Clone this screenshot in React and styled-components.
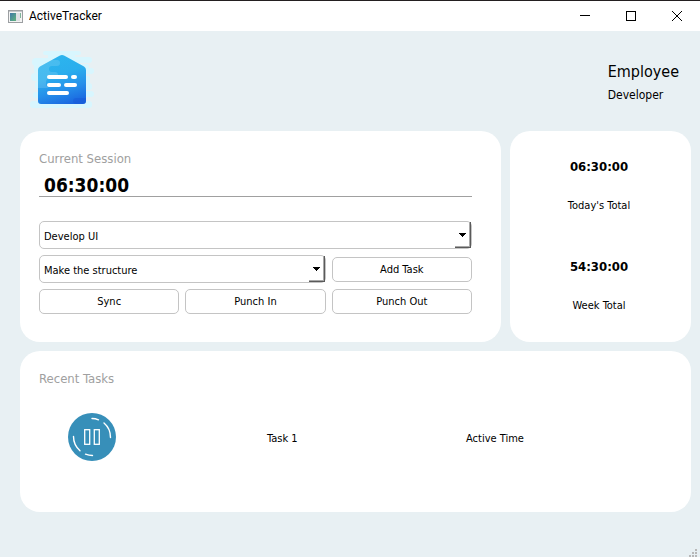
import React from "react";
import styled, { createGlobalStyle } from "styled-components";

const GlobalStyle = createGlobalStyle`
  *, *::before, *::after { box-sizing: border-box; }
  body {
    margin: 0;
    background: #e8f0f3;
    color: #000;
    font: 11px/16px "DejaVu Sans Condensed", "DejaVu Sans", sans-serif;
  }
  button, input, select { font: inherit; color: inherit; }
`;

const Window = styled.div`
  display: flex;
  flex-direction: column;
  min-height: 100vh;
  border-top: 1px solid #231f20;
`;

const TitleBar = styled.header`
  display: flex;
  align-items: center;
  height: 30px;
  padding-left: 8px;
  background: #fff;
`;

const AppTitle = styled.h1`
  flex: 1;
  margin: 0 0 0 6px;
  font: 400 12px/16px Roboto, "Open Sans", sans-serif;
`;

const WindowButton = styled.button`
  display: grid;
  place-items: center;
  width: 46px;
  height: 30px;
  padding: 0;
  border: 0;
  background: transparent;
`;

const Main = styled.main`
  display: flex;
  flex: 1;
  flex-direction: column;
  padding: 0 9px 0 20px;
`;

const Header = styled.div`
  display: flex;
  justify-content: space-between;
  height: 100px;
  padding: 17px 12px 0 10px;
`;

const Person = styled.div`
  padding-top: 12px;
`;

const PersonName = styled.div`
  font-size: 16px;
  line-height: 24px;
`;

const PersonRole = styled.div`
  font-size: 12px;
  line-height: 22px;
`;

const Panels = styled.div`
  display: grid;
  grid-template-columns: 481fr 181fr;
  gap: 9px;
`;

const Card = styled.section`
  border-radius: 20px;
  background: #fff;
`;

const SessionCard = styled(Card)`
  padding: 19px 29px 28px 19px;
`;

const TotalsCard = styled(Card)`
  display: flex;
  flex-direction: column;
  gap: 41px;
  padding: 26px 3px 0 0;
  text-align: center;
`;

const TasksCard = styled(Card)`
  grid-column: 1 / -1;
  padding: 19px 26px 51px 19px;
`;

const SessionLabel = styled.label`
  display: block;
  color: #a0a0a0;
  font-size: 13px;
  line-height: 18px;
`;

const TasksHeading = styled.h2`
  margin: 0;
  color: #a0a0a0;
  font-size: 13px;
  font-weight: 400;
  line-height: 18px;
`;

const SessionTime = styled.input`
  display: block;
  width: 100%;
  height: 29px;
  margin-bottom: 24px;
  padding: 5px 5px 0;
  border: 0;
  border-bottom: 1px solid #a0a0a0;
  background: transparent;
  font-size: 19px;
  font-weight: 700;
`;

const Controls = styled.div`
  display: grid;
  grid-template-columns: repeat(3, 1fr);
  align-items: center;
  gap: 6px;
`;

const ComboFrame = styled.div`
  position: relative;
  grid-column: span ${(p) => p.$span};
  height: 28px;
`;

const ComboSelect = styled.select`
  appearance: none;
  width: 100%;
  height: 100%;
  padding: 4px 20px 0 4px;
  border: 1px solid #c4c4c4;
  border-radius: 5px;
  background: #fff;
`;

const ComboArrow = styled.span`
  position: absolute;
  top: 1px;
  right: 1px;
  bottom: 1px;
  display: grid;
  place-items: center;
  width: 16px;
  border-right: 1px solid #5a5a5a;
  border-bottom: 1px solid #5a5a5a;
  box-shadow: inset -1px -1px #a8a8a8;
  pointer-events: none;
`;

const PushButton = styled.button`
  height: 25px;
  padding: 1px 8px 0;
  border: 1px solid #c4c4c4;
  border-radius: 5px;
  background: #fff;
`;

const TotalValue = styled.div`
  font-size: 13px;
  font-weight: 700;
  line-height: 20px;
`;

const TotalLabel = styled.div`
  margin-top: 19px;
  line-height: 20px;
`;

const TaskRow = styled.div`
  display: grid;
  grid-template-columns: repeat(3, 1fr);
  align-items: center;
  padding: 25px 0 0 29px;
`;

const TaskText = styled.span`
  padding-top: 4px;
`;

const PauseButton = styled.button`
  display: block;
  width: 48px;
  height: 48px;
  padding: 0;
  border: 0;
  border-radius: 50%;
  background: transparent;
`;

const ResizeGrip = styled.svg`
  align-self: flex-end;
  margin-top: auto;
  margin-right: -6px;
`;

function WindowIcon() {
  return (
    <svg width="15" height="13" viewBox="0 0 15 13" aria-hidden="true">
      <defs>
        <linearGradient id="screen" x1="0" y1="0" x2="1" y2="1">
          <stop offset="0" stopColor="#3f78a8" />
          <stop offset="1" stopColor="#5fb37c" />
        </linearGradient>
      </defs>
      <rect x="0.5" y="0.5" width="14" height="12" fill="#f4f4f4" stroke="#9c9fa2" />
      <path d="M1 1.5h13" stroke="#c2c6ca" />
      <rect x="2" y="3" width="6" height="8" fill="url(#screen)" />
      <rect x="8" y="3" width="4" height="8" fill="#dcdfe3" />
      <rect x="12" y="3" width="1" height="5" fill="#7fb59a" />
    </svg>
  );
}

function Logo() {
  return (
    <svg width="66" height="62" viewBox="0 0 66 62" role="img" aria-label="ActiveTracker logo">
      <defs>
        <linearGradient id="house" x1="0.35" y1="0" x2="0.65" y2="1">
          <stop offset="0" stopColor="#2cb5ee" />
          <stop offset="0.4" stopColor="#2baeed" />
          <stop offset="0.7" stopColor="#2590ea" />
          <stop offset="1" stopColor="#1a67e0" />
        </linearGradient>
        <clipPath id="houseClip">
          <path d="M29.500 7.700Q32 6.300 34.500 7.700L54 18.500Q56 19.700 56 22V53Q56 56 53 56H11Q8 56 8 53V22Q8 19.700 10 18.500Z" />
        </clipPath>
      </defs>
      <g fill="#d8f6fe">
        <rect x="13" y="3" width="38" height="4" rx="2" />
        <rect x="18" y="5" width="27" height="7" rx="3" />
        <rect x="2" y="10" width="24" height="8" rx="4" />
        <rect x="40" y="9" width="22" height="6" rx="3" />
        <rect x="4" y="16" width="55" height="9" rx="2" />
        <rect x="46" y="20" width="18" height="6" rx="3" />
        <rect x="1" y="25" width="20" height="8" rx="4" />
        <rect x="48" y="28" width="12" height="9" rx="3" />
        <rect x="5" y="33" width="16" height="8" rx="3" />
        <rect x="48" y="35" width="14" height="7" rx="3" />
        <rect x="3" y="44" width="18" height="6" rx="3" />
        <rect x="45" y="43" width="19" height="6" rx="3" />
        <rect x="0" y="53" width="62" height="7" rx="3" />
      </g>
      <g clipPath="url(#houseClip)">
        <rect x="8" y="6" width="48" height="50" fill="url(#house)" />
        <path
          d="M8 12H27Q30 12 30 15T27 18H22Q19 18 19 21T22 24H25Q28 24 28 27T25 30H20Q16 30 16 35T20 40H8Z"
          fill="#fff"
          opacity="0.14"
        />
        <path d="M56 50H46Q43 50 43 53T46 56H56Z" fill="#1756d5" opacity="0.4" />
      </g>
      <g fill="#fff">
        <rect x="17" y="27" width="21" height="4" rx="2" />
        <rect x="41" y="27" width="6" height="4" rx="2" />
        <rect x="17" y="35" width="14" height="4" rx="2" />
        <rect x="34" y="35" width="13" height="4" rx="2" />
        <rect x="17" y="43" width="22" height="4" rx="2" />
      </g>
    </svg>
  );
}

function PauseIcon() {
  return (
    <svg width="48" height="48" viewBox="0 0 48 48" aria-hidden="true">
      <circle cx="24" cy="24" r="24" fill="#378fb9" />
      <g fill="none" stroke="#fff" strokeWidth="1.3">
        <rect x="16.700" y="16.700" width="5" height="14.600" />
        <rect x="26.300" y="16.700" width="5" height="14.600" />
      </g>
      <g fill="none" stroke="#fff" strokeWidth="1.400" strokeLinecap="round">
        <path d="M24 5.500Q27.500 5.500 30.500 6.800" />
        <path d="M36 10Q42.500 15.500 42.500 24.500" />
        <path d="M5.500 23.500Q5.500 32 12 37.700" />
        <path d="M17.500 41.200Q21 42.500 24.500 42.500" />
      </g>
    </svg>
  );
}

function Combo({ span, label, options }) {
  return (
    <ComboFrame $span={span}>
      <ComboSelect aria-label={label}>
        {options.map((option) => (
          <option key={option}>{option}</option>
        ))}
      </ComboSelect>
      <ComboArrow>
        <svg width="7" height="4" viewBox="0 0 7 4" shapeRendering="crispEdges" aria-hidden="true">
          <path d="M0 0H7V1H6V2H5V3H4V4H3V3H2V2H1V1H0Z" />
        </svg>
      </ComboArrow>
    </ComboFrame>
  );
}

function Total({ value, label }) {
  return (
    <div>
      <TotalValue>{value}</TotalValue>
      <TotalLabel>{label}</TotalLabel>
    </div>
  );
}

export default function App() {
  return (
    <Window>
      <GlobalStyle />
      <TitleBar>
        <WindowIcon />
        <AppTitle>ActiveTracker</AppTitle>
        <WindowButton aria-label="Minimize">
          <svg width="10" height="10" viewBox="0 0 10 10" stroke="#000">
            <path d="M0 4.500H10" />
          </svg>
        </WindowButton>
        <WindowButton aria-label="Maximize">
          <svg width="10" height="10" viewBox="0 0 10 10" fill="none" stroke="#000">
            <rect x="0.5" y="0.5" width="9" height="9" />
          </svg>
        </WindowButton>
        <WindowButton aria-label="Close">
          <svg width="10" height="10" viewBox="0 0 10 10" stroke="#000">
            <path d="M0 0L10 10M10 0L0 10" />
          </svg>
        </WindowButton>
      </TitleBar>
      <Main>
        <Header>
          <Logo />
          <Person>
            <PersonName>Employee</PersonName>
            <PersonRole>Developer</PersonRole>
          </Person>
        </Header>
        <Panels>
          <SessionCard>
            <SessionLabel htmlFor="session-time">Current Session</SessionLabel>
            <SessionTime id="session-time" readOnly value="06:30:00" />
            <Controls>
              <Combo span={3} label="Project" options={["Develop UI"]} />
              <Combo span={2} label="Task" options={["Make the structure"]} />
              <PushButton>Add Task</PushButton>
              <PushButton>Sync</PushButton>
              <PushButton>Punch In</PushButton>
              <PushButton>Punch Out</PushButton>
            </Controls>
          </SessionCard>
          <TotalsCard>
            <Total value="06:30:00" label="Today's Total" />
            <Total value="54:30:00" label="Week Total" />
          </TotalsCard>
          <TasksCard>
            <TasksHeading>Recent Tasks</TasksHeading>
            <TaskRow>
              <PauseButton aria-label="Pause Task 1">
                <PauseIcon />
              </PauseButton>
              <TaskText>Task 1</TaskText>
              <TaskText>Active Time</TaskText>
            </TaskRow>
          </TasksCard>
        </Panels>
        <ResizeGrip width="8" height="8" viewBox="0 0 8 8" fill="#b8b8b8" aria-hidden="true">
          <path d="M6 0h2v2h-2zM3 3h2v2h-2zM6 3h2v2h-2zM0 6h2v2h-2zM3 6h2v2h-2zM6 6h2v2h-2z" />
        </ResizeGrip>
      </Main>
    </Window>
  );
}
